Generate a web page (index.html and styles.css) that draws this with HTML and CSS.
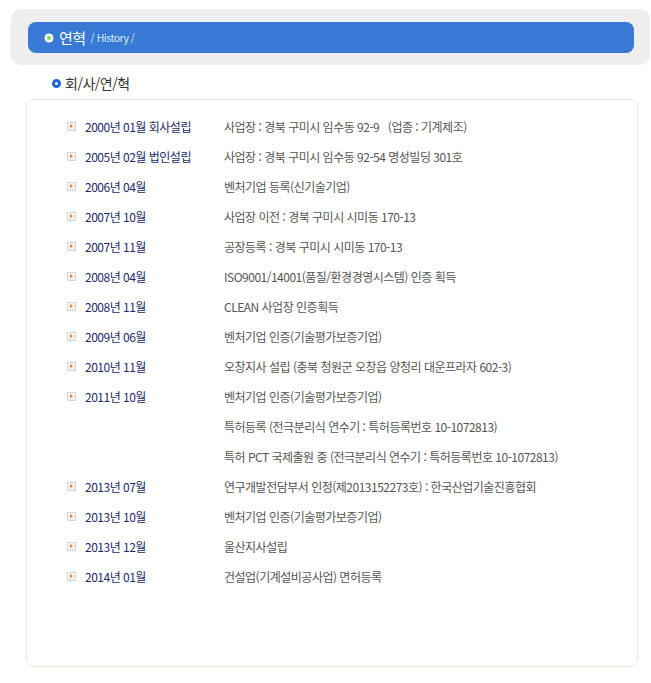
FILE: index.html
```html
<!DOCTYPE html>
<html lang="ko">
<head>
  <meta charset="UTF-8" />
  <title>연혁</title>
  <link rel="stylesheet" href="styles.css">
</head>
<body>
  <div class="page-head">
    <div class="head-bar">
      <span class="dot-green"></span>
      <h2>연혁</h2>
      <span class="path">/ History /</span>
    </div>
  </div>

  <h3 class="sub-title"><span class="dot-blue"></span>회/사/연/혁</h3>

  <div class="history-box">
    <ul class="history">
      <li><span class="year">2000년 01월 회사설립</span><span class="desc">사업장 : 경북 구미시 임수동 92-9 &nbsp;&nbsp;(업종 : 기계제조)</span></li>
      <li><span class="year">2005년 02월 법인설립</span><span class="desc">사업장 : 경북 구미시 임수동 92-54 명성빌딩 301호</span></li>
      <li><span class="year">2006년 04월</span><span class="desc">벤처기업 등록(신기술기업)</span></li>
      <li><span class="year">2007년 10월</span><span class="desc">사업장 이전 : 경북 구미시 시미동 170-13</span></li>
      <li><span class="year">2007년 11월</span><span class="desc">공장등록 : 경북 구미시 시미동 170-13</span></li>
      <li><span class="year">2008년 04월</span><span class="desc">ISO9001/14001(품질/환경경영시스템) 인증 획득</span></li>
      <li><span class="year">2008년 11월</span><span class="desc">CLEAN 사업장 인증획득</span></li>
      <li><span class="year">2009년 06월</span><span class="desc">벤처기업 인증(기술평가보증기업)</span></li>
      <li><span class="year">2010년 11월</span><span class="desc">오창지사 설립 (충북 청원군 오창읍 양청리 대운프라자 602-3)</span></li>
      <li><span class="year">2011년 10월</span><span class="desc">벤처기업 인증(기술평가보증기업)</span></li>
      <li class="cont"><span class="year"></span><span class="desc">특허등록 (전극분리식 연수기 : 특허등록번호 10-1072813)</span></li>
      <li class="cont"><span class="year"></span><span class="desc">특허 PCT 국제출원 중 (전극분리식 연수기 : 특허등록번호 10-1072813)</span></li>
      <li><span class="year">2013년 07월</span><span class="desc">연구개발전담부서 인정(제2013152273호) : 한국산업기술진흥협회</span></li>
      <li><span class="year">2013년 10월</span><span class="desc">벤처기업 인증(기술평가보증기업)</span></li>
      <li><span class="year">2013년 12월</span><span class="desc">울산지사설립</span></li>
      <li><span class="year">2014년 01월</span><span class="desc">건설업(기계설비공사업) 면허등록</span></li>
    </ul>
  </div>
</body>
</html>
```

FILE: styles.css
```css
body {
  margin: 0;
  padding: 0;
  background: #fff;
  font-family: "Noto Sans CJK KR", "Noto Sans", sans-serif;
  width: 651px;
}
.page-head {
  margin: 9px 1px 0 11px;
  background: #eeeeee;
  border-radius: 10px;
  padding: 13px 16px 12px 17px;
}
.head-bar {
  display: flex;
  align-items: center;
  height: 31px;
  background: #3779d4;
  border-radius: 8px;
  padding-left: 17px;
  color: #fff;
}
.dot-green {
  width: 4px;
  height: 4px;
  border: 2px solid #fff;
  background: #7ed957;
  border-radius: 50%;
  margin-right: 6px;
  box-shadow: 0 0 0 0.5px #fff;
}
.head-bar h2 {
  margin: 0;
  font-size: 15px;
  font-weight: normal;
  letter-spacing: -0.5px;
  margin-right: 5px;
}
.path {
  font-size: 10.5px;
  color: #dce8fa;
  letter-spacing: -0.5px;
}
.sub-title {
  display: flex;
  align-items: center;
  margin: 8px 0 0 52px;
  height: 20px;
  font-size: 14px;
  font-weight: normal;
  color: #333;
  letter-spacing: -0.5px;
}
.dot-blue {
  width: 3px;
  height: 3px;
  border: 3px solid #1f63d8;
  border-radius: 50%;
  margin-right: 4px;
}
.history-box {
  margin: 6px 13px 0 26px;
  height: 555px;
  border: 1px solid #ece9dc;
  border-radius: 8px;
  padding-top: 11px;
  box-sizing: content-box;
}
.history {
  list-style: none;
  margin: 0;
  padding: 0 0 0 40px;
}
.history li {
  display: flex;
  align-items: center;
  height: 30px;
  font-size: 12px;
  letter-spacing: -0.5px;
  position: relative;
}
.history li::before {
  content: "";
  width: 7px;
  height: 7px;
  border: 1px solid #d6d6d6;
  background: linear-gradient(#ffffff, #ebebeb);
  margin-right: 9px;
}
/* orange arrow inside the bullet box */
.history li::after {
  content: "";
  position: absolute;
  left: 3px;
  top: 13px;
  border-left: 3px solid #f07c1e;
  border-top: 2px solid transparent;
  border-bottom: 2px solid transparent;
}
.history li.cont::before,
.history li.cont::after {
  visibility: hidden;
}
.year {
  width: 139px;
  color: #1c2a6b;
}
.desc {
  color: #555;
}
```
